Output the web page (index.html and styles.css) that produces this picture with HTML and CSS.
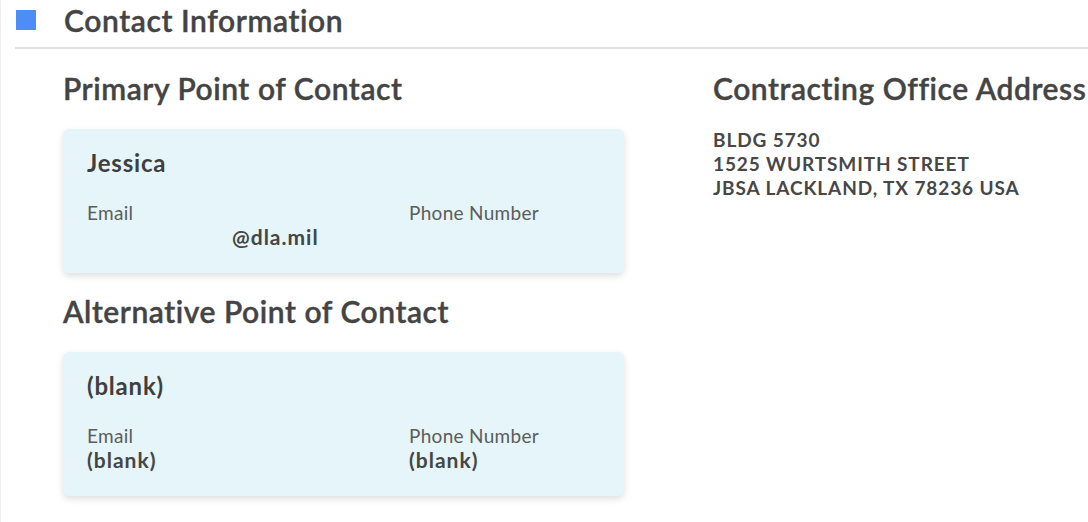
FILE: index.html
```html
<!DOCTYPE html>
<html lang="en">
<head>
<meta charset="utf-8">
<title>Contact Information</title>
<link rel="stylesheet" href="styles.css">
</head>
<body>
<div class="page">
  <div class="section-header">
    <span class="marker"></span>
    <h1 class="section-title">Contact Information</h1>
  </div>
  <div class="divider"></div>
  <div class="content">
    <div class="col-left">
      <h2 class="sub-title">Primary Point of Contact</h2>
      <div class="card">
        <div class="card-name">Jessica</div>
        <div class="fields">
          <div class="field">
            <div class="label">Email</div>
            <div class="value value-email">@dla.mil</div>
          </div>
          <div class="field">
            <div class="label">Phone Number</div>
            <div class="value"></div>
          </div>
        </div>
      </div>
      <h2 class="sub-title sub-title-alt">Alternative Point of Contact</h2>
      <div class="card">
        <div class="card-name">(blank)</div>
        <div class="fields">
          <div class="field">
            <div class="label">Email</div>
            <div class="value">(blank)</div>
          </div>
          <div class="field">
            <div class="label">Phone Number</div>
            <div class="value">(blank)</div>
          </div>
        </div>
      </div>
    </div>
    <div class="col-right">
      <h2 class="sub-title">Contracting Office Address</h2>
      <div class="address">
        <div>BLDG 5730</div>
        <div>1525 WURTSMITH STREET</div>
        <div>JBSA LACKLAND, TX 78236 USA</div>
      </div>
    </div>
  </div>
</div>
</body>
</html>
```

FILE: styles.css
```css
html, body {
  margin: 0;
  padding: 0;
  background: #ffffff;
}

body {
  font-family: "Lato", "Open Sans", "Liberation Sans", sans-serif;
  color: #404040;
  width: 1088px;
  height: 522px;
  overflow: hidden;
}

.page {
  border-left: 1px solid #f0f0f0;
  min-height: 522px;
  box-sizing: border-box;
}

.section-header {
  display: flex;
  align-items: center;
  gap: 28px;
  height: 40px;
  padding-left: 15px;
}

.marker {
  width: 20px;
  height: 20px;
  background: #4e8cf6;
  flex: none;
}

.section-title {
  margin: 0;
  font-size: 30px;
  line-height: 36px;
  font-weight: 600;
  letter-spacing: 0.6px;
  color: #444444;
  -webkit-text-stroke: 0.4px #444444;
}

.divider {
  margin-left: 14px;
  margin-top: 7px;
  height: 2px;
  background: #e1e1e1;
}

.content {
  display: grid;
  grid-template-columns: 561px 1fr;
  column-gap: 89px;
  padding-left: 62px;
  padding-top: 21px;
}

.sub-title {
  margin: 0;
  font-size: 30px;
  line-height: 36px;
  font-weight: 600;
  letter-spacing: 0.55px;
  color: #444444;
  -webkit-text-stroke: 0.4px #444444;
}

.sub-title-alt {
  margin-top: 20px;
}

.card {
  margin-top: 23px;
  background: #e5f5f9;
  border-radius: 6px;
  box-shadow: 0 3px 7px rgba(0, 0, 0, 0.13);
  padding: 21px 24px 24px;
}

.card-name {
  font-size: 24px;
  line-height: 26px;
  font-weight: 700;
  letter-spacing: 0.8px;
  color: #3f3f3f;
}

.fields {
  display: grid;
  grid-template-columns: 322px 1fr;
  margin-top: 25px;
}

.label {
  font-size: 19px;
  line-height: 24px;
  letter-spacing: 0.3px;
  color: #5c5c5c;
}

.value {
  font-size: 21px;
  line-height: 24px;
  font-weight: 700;
  letter-spacing: 1px;
  color: #454545;
  min-height: 24px;
}

.value-email {
  padding-left: 145px;
}

.address {
  margin-top: 22px;
  font-size: 19px;
  line-height: 24px;
  font-weight: 700;
  letter-spacing: 0.9px;
  color: #474747;
}
```
